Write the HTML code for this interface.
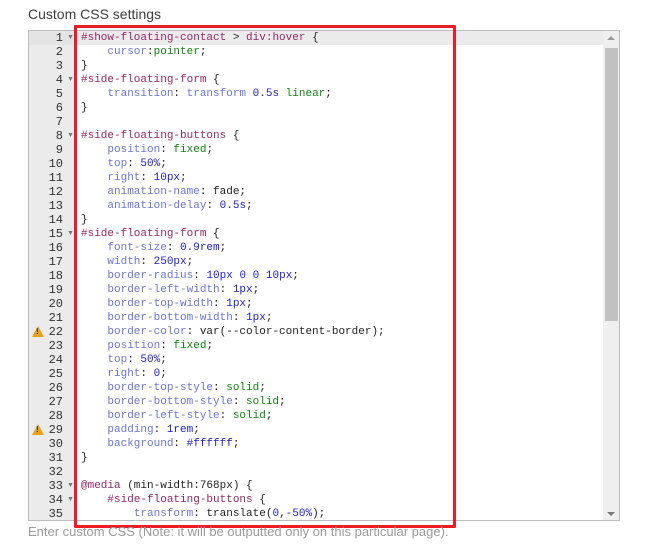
<!DOCTYPE html>
<html><head><meta charset="utf-8"><style>
body{margin:0;width:646px;height:557px;background:#fff;position:relative;overflow:hidden;font-family:"Liberation Sans",sans-serif}
.title{position:absolute;left:28px;top:6px;font-size:14px;color:#3c3c3c}
.ed{position:absolute;left:28px;top:30px;width:590px;height:489px;border:1px solid #bdbdbd;background:#fff;overflow:hidden}
.gut{position:absolute;left:0;top:0;width:47px;height:100%;background:#ebebeb}
.act{position:absolute;left:0;top:0;width:100%;height:14px;background:#e4e4e4}
.actc{position:absolute;left:47px;top:0;width:528px;height:14px;background:#ebebeb}
.ln{position:absolute;left:0;width:34px;text-align:right;font:12px/14px "Liberation Mono",monospace;color:#333}
.fd{position:absolute;left:38px;font-size:7px;color:#777;line-height:14px}
.wr{position:absolute;left:3px;width:0;height:0;border-left:6px solid transparent;border-right:6px solid transparent;border-bottom:11px solid #e8a21b}
.wr:after{content:"!";position:absolute;left:-2px;top:1px;font:bold 8px "Liberation Sans";color:#333}
.cd{position:absolute;left:52px;white-space:pre;font:11px/14px "Liberation Mono",monospace;color:#222}
.s{color:#932863}.p{color:#6c74d6}.k{color:#128312}.n{color:#2020c8}
.sb{position:absolute;left:574px;top:0;width:16px;height:100%;background:#efefef}
.th{position:absolute;left:2px;top:17px;width:13px;height:273px;background:#c1c1c1}
.red{position:absolute;left:74px;top:25px;width:376px;height:497px;border:3px solid #ed1c24;border-radius:1px}
.foot{position:absolute;left:28px;top:524px;font-size:13px;color:#9a9a9a}
</style></head><body>
<div class="title">Custom CSS settings</div>
<div class="ed">
<div class="gut"></div>
<div class="act" style="width:47px"></div><div class="actc"></div>
<div class="sb"><div style="position:absolute;left:4px;top:5px;border-left:4px solid transparent;border-right:4px solid transparent;border-bottom:4px solid #999"></div><div class="th"></div><div style="position:absolute;left:4px;top:481px;border-left:4px solid transparent;border-right:4px solid transparent;border-top:4px solid #777"></div></div>
<div id="g"></div>
</div>
<div class="red"></div>
<div class="foot">Enter custom CSS (Note: it will be outputted only on this particular page).</div>
<script>
var L=[
'<span class="s">#show-floating-contact</span> &gt; <span class="s">div:hover</span> {',
'    <span class="p">cursor</span>:<span class="k">pointer</span>;',
'}',
'<span class="s">#side-floating-form</span> {',
'    <span class="p">transition</span>: <span class="p">transform</span> <span class="n">0.5s</span> <span class="k">linear</span>;',
'}',
'',
'<span class="s">#side-floating-buttons</span> {',
'    <span class="p">position</span>: <span class="k">fixed</span>;',
'    <span class="p">top</span>: <span class="n">50%</span>;',
'    <span class="p">right</span>: <span class="n">10px</span>;',
'    <span class="p">animation-name</span>: fade;',
'    <span class="p">animation-delay</span>: <span class="n">0.5s</span>;',
'}',
'<span class="s">#side-floating-form</span> {',
'    <span class="p">font-size</span>: <span class="n">0.9rem</span>;',
'    <span class="p">width</span>: <span class="n">250px</span>;',
'    <span class="p">border-radius</span>: <span class="n">10px</span> <span class="n">0</span> <span class="n">0</span> <span class="n">10px</span>;',
'    <span class="p">border-left-width</span>: <span class="n">1px</span>;',
'    <span class="p">border-top-width</span>: <span class="n">1px</span>;',
'    <span class="p">border-bottom-width</span>: <span class="n">1px</span>;',
'    <span class="p">border-color</span>: var(--color-content-border);',
'    <span class="p">position</span>: <span class="k">fixed</span>;',
'    <span class="p">top</span>: <span class="n">50%</span>;',
'    <span class="p">right</span>: <span class="n">0</span>;',
'    <span class="p">border-top-style</span>: <span class="k">solid</span>;',
'    <span class="p">border-bottom-style</span>: <span class="k">solid</span>;',
'    <span class="p">border-left-style</span>: <span class="k">solid</span>;',
'    <span class="p">padding</span>: <span class="n">1rem</span>;',
'    <span class="p">background</span>: <span class="n">#ffffff</span>;',
'}',
'',
'<span class="s">@media</span> (min-width:768px) {',
'    <span class="s">#side-floating-buttons</span> {',
'        <span class="p">transform</span>: translate(<span class="n">0</span>,<span class="n">-50%</span>);'
];
var folds={1:1,4:1,8:1,15:1,33:1,34:1},warn={22:1,29:1},h='';
for(var i=0;i<L.length;i++){var n=i+1,t=i*14;
h+='<div class="ln" style="top:'+t+'px">'+n+'</div>';
if(folds[n])h+='<div class="fd" style="top:'+t+'px">&#9660;</div>';
if(warn[n])h+='<div class="wr" style="top:'+(t+1)+'px"></div>';
h+='<div class="cd" style="top:'+t+'px">'+L[i]+'</div>';}
document.getElementById('g').innerHTML=h;
</script>
</body></html>
